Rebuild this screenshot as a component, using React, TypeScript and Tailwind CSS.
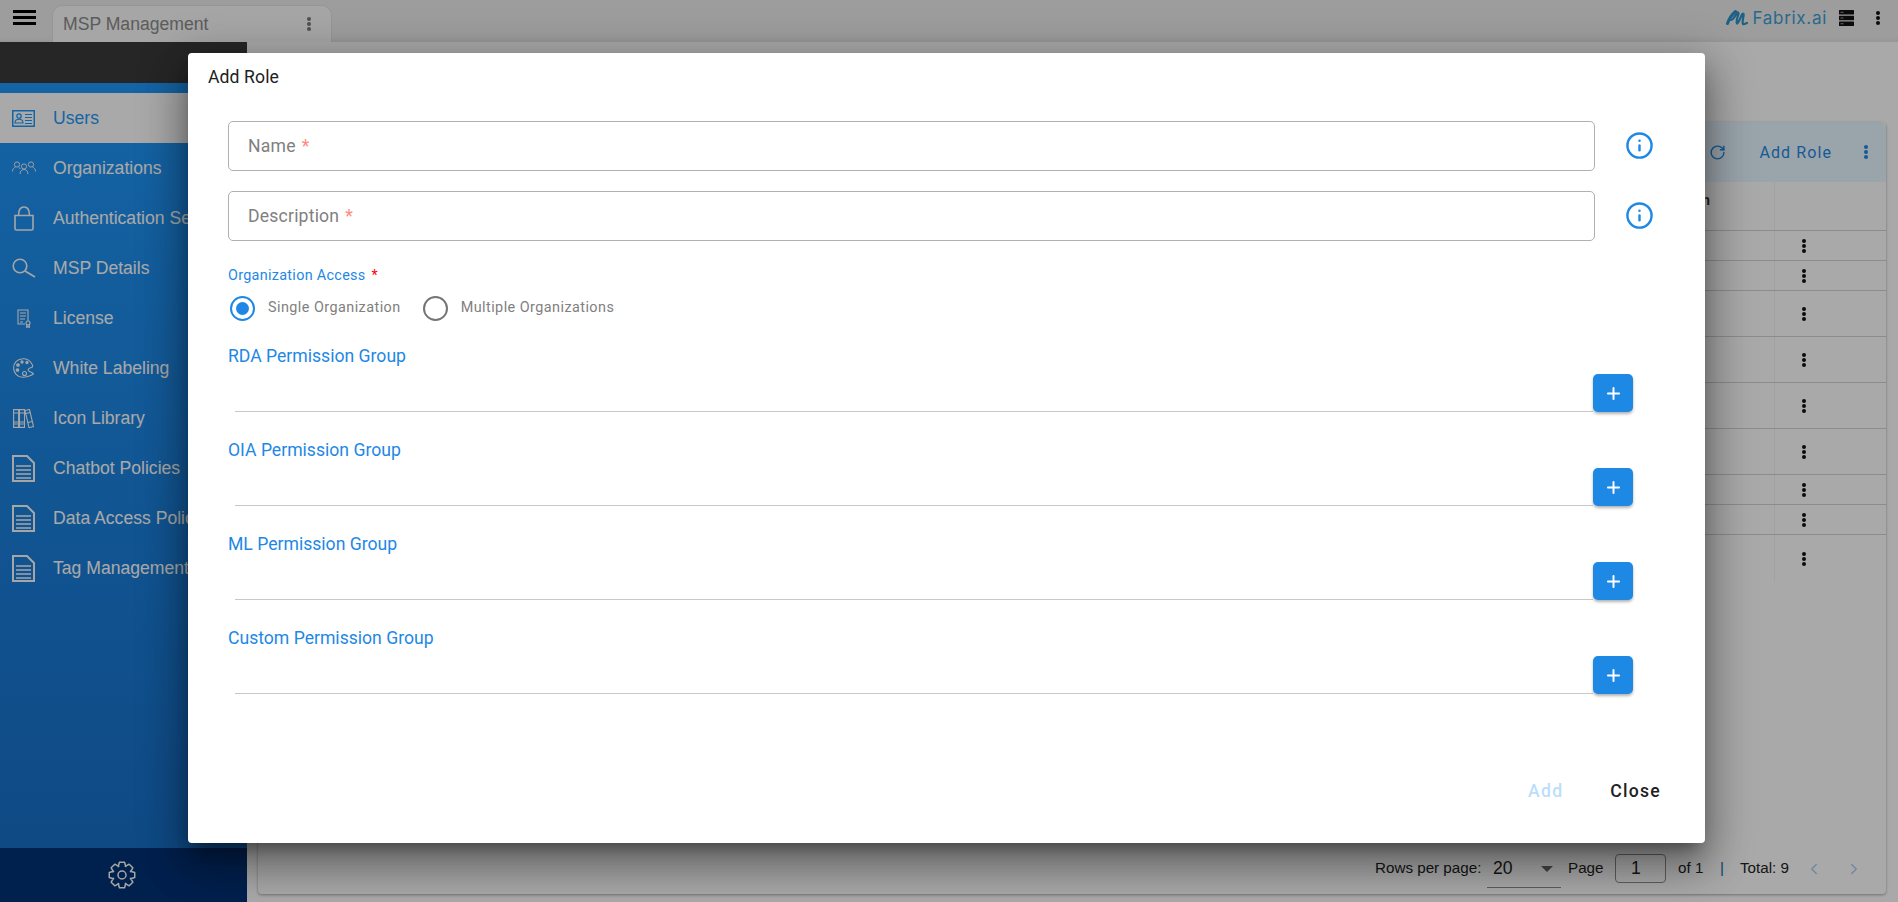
import { ChevronLeft, ChevronRight, Info, Plus, RotateCw } from "lucide-react";
import type { ReactNode } from "react";

const gearPath = (() => {
  const cx = 14;
  const cy = 14;
  const pts: string[] = [];
  for (let i = 0; i < 8; i++) {
    const a = (i * Math.PI) / 4 - Math.PI / 2;
    const at = (r: number, off: number) =>
      `${(cx + r * Math.cos(a + off)).toFixed(2)} ${(cy + r * Math.sin(a + off)).toFixed(2)}`;
    pts.push(at(9.2, -0.42), at(13, -0.2), at(13, 0.2), at(9.2, 0.42));
  }
  return `M${pts.join("L")}Z`;
})();

const DocIcon = () => (
  <svg width="23" height="27" viewBox="0 0 23 27" fill="none" stroke="currentColor" strokeWidth="2">
    <path d="M1 1h14l7 7v18H1z" />
    <path d="M4 11h15M4 15h15M4 19h15M4 23h15" strokeWidth="1.4" />
  </svg>
);

const UsersIcon = () => (
  <svg width="23" height="17" viewBox="0 0 23 17" fill="none" stroke="currentColor">
    <rect x="0.75" y="0.75" width="21.5" height="15.5" strokeWidth="1.5" />
    <circle cx="7" cy="6" r="2.2" strokeWidth="1.3" />
    <path d="M3 13c0-5 8-5 8 0zM13 4.5h7M13 7.5h7M13 10.5h7M13 13.5h7" strokeWidth="1.2" />
  </svg>
);

const OrgIcon = () => (
  <svg width="24" height="14" viewBox="0 0 24 14" fill="none" stroke="currentColor" strokeWidth="0.9">
    <circle cx="5" cy="3.5" r="2.6" />
    <circle cx="12" cy="5.5" r="2.6" />
    <circle cx="19" cy="3.5" r="2.6" />
    <path d="M0.5 10.5c0-3 2-4 3-4.5M8 13c0-3 2-4 3-4.500h2c1 .5 3 1.500 3 4.500M23.500 10.500c0-3-2-4-3-4.500M6.500 6c1 .5 1.500 1.500 1.700 2" />
  </svg>
);

const LockIcon = () => (
  <svg width="20" height="25" viewBox="0 0 20 25" fill="none" stroke="currentColor" strokeWidth="1.6">
    <path d="M1 9.500h18v13a1.500 1.500 0 0 1-1.500 1.500h-15A1.500 1.500 0 0 1 1 22.500z" />
    <path d="M4.500 9.500C4.500 4 6.500 1 10 1s5.500 3 5.500 8.500" />
  </svg>
);

const SearchIcon = () => (
  <svg width="24" height="20" viewBox="0 0 24 20" fill="none" stroke="currentColor" strokeWidth="1.6">
    <circle cx="8" cy="8" r="6.800" />
    <path d="M13 13l10 6" />
  </svg>
);

const LicenseIcon = () => (
  <svg width="14" height="19" viewBox="0 0 14 19" fill="none" stroke="currentColor" strokeWidth="1.1">
    <path d="M8 15H1V1h10v11" />
    <path d="M3 4h6M3 7h6M3 10h5M3 13h3" />
    <circle cx="11" cy="14" r="2" />
    <path d="M9.700 15.500V18.500l1.300-1 1.300 1V15.500" />
  </svg>
);

const PaletteIcon = () => (
  <svg width="21" height="20" viewBox="0 0 21 20" fill="none" stroke="currentColor" strokeWidth="1.1">
    <path d="M10 .7C4.500.7.600 4.700.600 10c0 5 4 9.300 9.400 9.300 2.500 0 9-1.800 10.400-3.500-1-1.500-4-1.500-5-3.300-.8-1.500 1-2.500 3-3 1.600-.5 1.500-2 .5-3.500C17.500 3 14 .7 10 .7z" />
    <circle cx="11.500" cy="15.500" r="2" />
    <circle cx="5" cy="7" r="1.300" fill="currentColor" />
    <circle cx="4.500" cy="12" r="1.300" fill="currentColor" />
    <circle cx="9" cy="4" r="1.100" fill="currentColor" />
    <circle cx="14" cy="4.500" r="1.100" fill="currentColor" />
  </svg>
);

const BooksIcon = () => (
  <svg width="21" height="19" viewBox="0 0 21 19" fill="none" stroke="currentColor" strokeWidth="1.100">
    <path d="M.6.6h5v17.800h-5zM6.500.6h5v17.800h-5zM12 1.500l4.500-1 4 17-4.500 1.200z" />
    <path d="M.6 4h5M.6 13h5M.6 15h5M6.500 4h5M6.500 13h5M6.500 15h5M12.800 4.500l4.500-1M15 13.500l4.500-1" />
  </svg>
);

const ServerIcon = () => (
  <svg width="15" height="16" viewBox="0 0 15 16" fill="#111">
    <rect width="15" height="4.400" rx="0.5" />
    <rect y="5.800" width="15" height="4.400" rx="0.5" />
    <rect y="11.600" width="15" height="4.400" rx="0.5" />
    <path d="M1.500 1.700h3v1h-3zM1.500 7.500h3v1h-3zM1.500 13.300h3v1h-3z" fill="#999" />
  </svg>
);

const LogoMark = () => (
  <svg width="22" height="16" viewBox="0 0 22 16" fill="none" stroke="#2f8fc4" strokeLinecap="round">
    <path d="M1.500 13.500C3 9 6 4.500 9.500 1.500" strokeWidth="3" />
    <path d="M3.500 9C6 12 8.500 7 11 3c1-1.500 2 0 1 2.500-1 3-2 6.500-1 8 1 .5 3-5 5-9 1-1.500 2-1 1.500 1.500-.5 3-1.500 6-.5 8 1 .7 2.500-.5 4-1" strokeWidth="2.200" />
  </svg>
);

const Dots = ({ className }: { className: string }) => (
  <span className={`flex flex-col items-center gap-[1px] ${className}`}>
    <span className="size-[4px] rounded-full bg-current" />
    <span className="size-[4px] rounded-full bg-current" />
    <span className="size-[4px] rounded-full bg-current" />
  </span>
);

const navItems: { label: string; icon: ReactNode }[] = [
  { label: "Users", icon: <UsersIcon /> },
  { label: "Organizations", icon: <OrgIcon /> },
  { label: "Authentication Settings", icon: <LockIcon /> },
  { label: "MSP Details", icon: <SearchIcon /> },
  { label: "License", icon: <LicenseIcon /> },
  { label: "White Labeling", icon: <PaletteIcon /> },
  { label: "Icon Library", icon: <BooksIcon /> },
  { label: "Chatbot Policies", icon: <DocIcon /> },
  { label: "Data Access Policies", icon: <DocIcon /> },
  { label: "Tag Management", icon: <DocIcon /> },
];

const rowHeights = ["h-[30px]", "h-[30px]", "h-[46px]", "h-[46px]", "h-[46px]", "h-[46px]", "h-[30px]", "h-[30px]", "h-[46px]"];

const Sidebar = () => (
  <aside className="flex w-[247px] shrink-0 flex-col">
    <div className="h-[41px] bg-[#383838]" />
    <nav className="flex flex-1 flex-col bg-gradient-to-b from-[#1f94f3] to-[#176dc4] pt-[10px]">
      {navItems.map((item, i) => (
        <div
          key={item.label}
          className={`flex h-[50px] items-center whitespace-nowrap text-[17.6px] ${i === 0 ? "bg-[#fafafa] text-[#1f94f3]" : "text-[#fafafa]"}`}
        >
          <span className={`mr-[6px] flex w-[47px] shrink-0 justify-center ${i === 0 ? "text-[#1f94f3]" : "text-[#f5f5f5]"}`}>{item.icon}</span>
          {item.label}
        </div>
      ))}
    </nav>
    <div className="flex h-[54px] items-center justify-center bg-[#003074] pr-[3px] text-[#f5f5f5]">
      <svg width="28" height="28" viewBox="0 0 28 28" fill="none" stroke="currentColor" strokeWidth="1.500" strokeLinejoin="round">
        <path d={gearPath} />
        <circle cx="14" cy="14" r="4" />
      </svg>
    </div>
  </aside>
);

const RolesCard = () => (
  <section className="flex h-[772px] flex-col rounded-[4px] bg-[#fafafa] shadow-[0_1px_3px_rgba(0,0,0,0.35)]">
    <div className="flex h-[60px] shrink-0 items-center justify-end rounded-t-[6px] bg-[#e3f2fd] text-[#1f85dc]">
      <RotateCw size={17} strokeWidth={2} className="mr-[33px]" />
      <span className="mr-[32px] pt-[1px] font-['Roboto',sans-serif] text-[16px] tracking-[1.1px]">Add Role</span>
      <Dots className="mr-[18px] text-[#1f85dc]" />
    </div>
    <div className="flex h-[49px] shrink-0 border-b border-[#cfcfcf] text-[14px] font-bold text-[#333]">
      <div className="flex-1 pr-[64px] pt-[8px] text-right">Description</div>
      <div className="w-[112px] border-l border-[#eee]" />
    </div>
    <div className="flex flex-col">
      {rowHeights.map((h, i) => (
        <div key={i} className={`flex ${h} border-b border-[#cfcfcf] last:border-b-0`}>
          <div className="flex-1" />
          <div className="flex w-[112px] items-center justify-center border-l border-[#eee] pr-[54px] pt-[1px] text-[#111]">
            <Dots className="" />
          </div>
        </div>
      ))}
    </div>
    <div className="mt-auto flex h-[53px] items-center pt-[2px] font-['Liberation_Sans',sans-serif] text-[15.2px] text-[#222]">
      <div className="ml-[1117px] flex items-center whitespace-nowrap">
        <span className="w-[112px]">Rows per page:</span>
        <div className="relative flex h-[38px] w-[74px] items-center border-b border-[#8a8a8a] pl-[6px] text-[17.6px]">
          20
          <span className="absolute right-[8px] top-[16px] border-x-[6px] border-t-[6px] border-x-transparent border-t-[#666]" />
        </div>
        <span className="ml-[7px] w-[47px]">Page</span>
        <div className="flex h-[29px] w-[51px] items-center rounded-[4px] border border-[#8a8a8a] pl-[15px] text-[17.6px]">1</div>
        <span className="ml-[12px] w-[42px]">of 1</span>
        <span className="w-[20px] text-[#1565a5]">|</span>
        <span className="w-[65px]">Total: 9</span>
        <ChevronLeft size={18} className="text-[#a9c8e8]" />
        <ChevronRight size={18} className="ml-[22px] text-[#a9c8e8]" />
      </div>
    </div>
  </section>
);

const TextField = ({ label }: { label: string }) => (
  <div className="flex items-center">
    <div className="flex h-[50px] w-[1367px] items-center rounded-[5px] border border-[#b0b0b0] pl-[19px] text-[17.6px] tracking-[0.2px] text-[#808080]">
      {label}
      <span className="ml-[6px] text-[#ff8a80]">*</span>
    </div>
    <Info size={29} strokeWidth={2} className="mb-[1px] ml-[30px] text-[#1e88e5]" />
  </div>
);

const PermissionGroup = ({ label }: { label: string }) => (
  <div className="flex h-[94px] flex-col">
    <div className="h-[20px] text-[17.6px] leading-[20px] text-[#1e88e5]">{label}</div>
    <div className="mt-[8px] flex items-end">
      <div className="ml-[7px] h-[37px] w-[1358px] border-b border-[#c8c8c8]" />
      <button className="flex h-[38px] w-[40px] items-center justify-center rounded-[5px] bg-[#1e88e5] text-white shadow-[0_2px_3px_rgba(0,0,0,0.3)]">
        <Plus size={19} strokeWidth={2.500} />
      </button>
    </div>
  </div>
);

const AddRoleDialog = () => (
  <div className="absolute inset-0 bg-black/32 pl-[188px] pt-[53px]">
    <div className="flex h-[790px] w-[1517px] flex-col rounded-[4px] bg-white font-['Roboto',sans-serif] shadow-[0_11px_15px_-7px_rgba(0,0,0,0.35),0_24px_38px_3px_rgba(0,0,0,0.25),0_9px_46px_8px_rgba(0,0,0,0.22)]">
      <h2 className="pl-[20px] pt-[14px] text-[17.6px] leading-[20px] tracking-[0.1px] text-[#212121]">Add Role</h2>
      <div className="flex flex-col gap-[20px] pl-[40px] pt-[34px]">
        <TextField label="Name" />
        <TextField label="Description" />
      </div>
      <div className="pl-[40px] pt-[25px]">
        <div className="h-[20px] text-[14.4px] leading-[20px] tracking-[0.3px] text-[#1e88e5]">
          Organization Access<span className="ml-[6px] text-[#f00]">*</span>
        </div>
        <div className="mt-[9px] flex h-[26px] items-center pl-[2px] text-[14.4px] tracking-[0.45px] text-[#808080]">
          <span className="flex size-[25px] items-center justify-center rounded-full border-[2.500px] border-[#1e88e5]">
            <span className="size-[13px] rounded-full bg-[#1e88e5]" />
          </span>
          <span className="ml-[13px]">Single Organization</span>
          <span className="ml-[22px] size-[25px] rounded-full border-[2.500px] border-[#757575]" />
          <span className="ml-[13px]">Multiple Organizations</span>
        </div>
      </div>
      <div className="flex flex-col pl-[40px] pt-[25px]">
        <PermissionGroup label="RDA Permission Group" />
        <PermissionGroup label="OIA Permission Group" />
        <PermissionGroup label="ML Permission Group" />
        <PermissionGroup label="Custom Permission Group" />
      </div>
      <div className="mt-auto flex justify-end pb-[42px] pr-[44px] text-[17.6px] font-medium leading-[20px] tracking-[1.250px]">
        <span className="mr-[47px] text-[#bbdefb]">Add</span>
        <span className="text-[#212121]">Close</span>
      </div>
    </div>
  </div>
);

export default function App() {
  return (
    <div className="relative h-[902px] w-full overflow-hidden bg-[#fafafa] font-['Liberation_Sans',sans-serif]">
      <header className="flex h-[42px] items-start bg-[#e8e8e8] shadow-[inset_0_-8px_8px_-8px_rgba(0,0,0,0.08)]">
        <div className="ml-[13px] mt-[10px] flex w-[23px] flex-col gap-[3.500px]">
          <span className="h-[2.500px] bg-black" />
          <span className="h-[2.500px] bg-black" />
          <span className="h-[2.500px] bg-black" />
        </div>
        <div className="ml-[16px] mt-[5px] flex h-[37px] w-[280px] items-center justify-between rounded-t-[10px] border border-b-0 border-[#dcdcdc] bg-[#f5f5f5] pl-[10px] pr-[20px] text-[17.6px] text-[#888]">
          MSP Management
          <Dots className="text-[#777]" />
        </div>
        <div className="ml-auto mt-[8px] flex items-center text-[#3a9bd0]">
          <LogoMark />
          <span className="ml-[5px] font-['Inter',sans-serif] text-[17px] leading-[20px] tracking-[0.7px]">Fabrix.ai</span>
          <span className="ml-[12px]"><ServerIcon /></span>
          <Dots className="ml-[22px] mr-[18px] text-[#111]" />
        </div>
      </header>
      <div className="flex h-[860px]">
        <Sidebar />
        <main className="min-w-0 flex-1 pl-[11px] pr-[12px] pt-[80px]">
          <RolesCard />
        </main>
      </div>
      <AddRoleDialog />
    </div>
  );
}
